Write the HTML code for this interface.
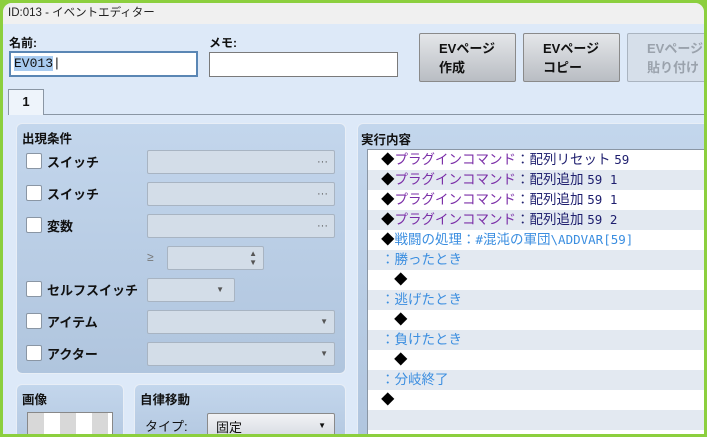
<!DOCTYPE html>
<html><head><meta charset="utf-8"><style>
*{box-sizing:border-box;margin:0;padding:0}
body{width:707px;height:437px;overflow:hidden;background:#8ccf3e;font-family:"Liberation Sans","Noto Sans CJK JP",sans-serif;font-size:13px;color:#111;position:relative}
.win{position:absolute;left:3px;top:3px;right:3px;bottom:3px;background:#dde9f8;border-radius:9px 9px 0 0;overflow:hidden}
.title{position:absolute;left:0;top:0;right:0;height:21px;background:#f0f0f0;font-size:11.5px;padding:1px 0 0 5px;color:#222}
.a{position:absolute}
.lbl{font-weight:bold;font-size:12px}
.inp{background:#fff;border:1px solid #7a7a7a}
.btn{position:absolute;top:30px;width:97px;height:49px;border:1px solid #8a8a8a;border-radius:2px;background:linear-gradient(#e4e6e9,#b9bdc3);font-weight:bold;font-size:13px;padding:5px 0 0 19px;line-height:19px}
.panel{position:absolute;border:1px solid #e8eef6;border-radius:6px;background:linear-gradient(#c3d6ec,#b0c5de)}
.ptitle{position:absolute;left:5px;top:4px;font-weight:bold;font-size:12.5px}
.cb{position:absolute;left:9px;width:16px;height:16px;background:#fff;border:1px solid #8a96a4;border-radius:2px}
.cl{position:absolute;left:30px;font-weight:bold;font-size:13px}
.fld{position:absolute;left:130px;width:188px;height:24px;border:1px solid #a8b4c2;border-radius:2px;background:#d3dde8;font-size:11px;color:#555;text-align:right;padding:0 6px 0 0;line-height:22px}
.list{position:absolute;left:9px;top:25px;right:-2px;bottom:0;background:#fff;border:1px solid #8a96a4}
.row{height:20px;line-height:20px;padding-left:13px;font-size:13.5px;white-space:nowrap;color:#1e1e6e}
.row:nth-child(even){background:#e3e9f1}
.p{color:#7b2fa8}.b{color:#3b8ee0}
.n{font-family:"DejaVu Sans Mono","Noto Sans CJK JP",monospace;font-size:12.5px}
</style></head><body>
<div class="win">
<div class="title">ID:013 - イベントエディター</div>
<div class="a lbl" style="left:6px;top:31px">名前:</div>
<div class="a inp" style="left:6px;top:48px;width:189px;height:26px;border:2px solid #5a86b4;padding:3px 3px;font-family:'Liberation Mono',monospace;font-size:13px"><span style="background:#a8cbf0">EV013</span>|</div>
<div class="a lbl" style="left:206px;top:31px">メモ:</div>
<div class="a inp" style="left:206px;top:49px;width:189px;height:25px"></div>
<div class="btn" style="left:416px">EVページ<br>作成</div>
<div class="btn" style="left:520px">EVページ<br>コピー</div>
<div class="btn" style="left:624px;background:#d6dfea;border-color:#aab4c0;color:#9aa2ac">EVページ<br>貼り付け</div>
<div class="a" style="left:5px;top:86px;width:36px;height:26px;background:#eef4fb;border:1px solid #8a96a4;border-bottom:none;font-weight:bold;text-align:center;line-height:24px;z-index:2">1</div>
<div class="a" style="left:5px;top:111px;right:0;bottom:0;border-top:1px solid #8a96a4;background:#dde9f8"></div>
<div class="panel" style="left:13px;top:120px;width:330px;height:251px">
<div class="ptitle">出現条件</div>
<div class="cb" style="top:29px"></div><div class="cl" style="top:28px">スイッチ</div><div class="fld" style="top:26px">···</div>
<div class="cb" style="top:61px"></div><div class="cl" style="top:60px">スイッチ</div><div class="fld" style="top:58px">···</div>
<div class="cb" style="top:93px"></div><div class="cl" style="top:92px">変数</div><div class="fld" style="top:90px">···</div>
<div class="a" style="left:130px;top:126px;color:#777;font-size:12px">≥</div>
<div class="fld" style="left:150px;top:122px;width:97px;font-size:8px;line-height:9px;padding-top:2px">▲<br>▼</div>
<div class="cb" style="top:157px"></div><div class="cl" style="top:156px">セルフスイッチ</div><div class="fld" style="top:154px;width:88px;font-size:8px;padding-right:10px">▼</div>
<div class="cb" style="top:189px"></div><div class="cl" style="top:188px">アイテム</div><div class="fld" style="top:186px;font-size:8px">▼</div>
<div class="cb" style="top:221px"></div><div class="cl" style="top:220px">アクター</div><div class="fld" style="top:218px;font-size:8px">▼</div>
</div>
<div class="panel" style="left:13px;top:381px;width:108px;height:70px">
<div class="ptitle">画像</div>
<div class="a" style="left:10px;top:27px;width:86px;height:30px;background:repeating-linear-gradient(90deg,#d8d8d8 0 16px,#fff 16px 32px);border:1px solid #888"></div>
</div>
<div class="panel" style="left:131px;top:381px;width:212px;height:70px">
<div class="ptitle">自律移動</div>
<div class="a" style="left:10px;top:31px;font-size:13px">タイプ:</div>
<div class="a" style="left:72px;top:28px;width:128px;height:26px;border:1px solid #8a8a8a;border-radius:2px;background:linear-gradient(#f2f3f5,#d6dbe2);padding:3px 8px;font-size:13px">固定<span style="float:right;font-size:8px;padding-top:4px">▼</span></div>
</div>
<div class="panel" style="left:354px;top:120px;width:360px;height:320px">
<div class="ptitle" style="top:5px;left:3px">実行内容</div>
<div class="list">
<div class="row"><span style="color:#000">◆</span><span class="p">プラグインコマンド</span>：配列リセット <span class="n">59</span></div>
<div class="row"><span style="color:#000">◆</span><span class="p">プラグインコマンド</span>：配列追加 <span class="n">59 1</span></div>
<div class="row"><span style="color:#000">◆</span><span class="p">プラグインコマンド</span>：配列追加 <span class="n">59 1</span></div>
<div class="row"><span style="color:#000">◆</span><span class="p">プラグインコマンド</span>：配列追加 <span class="n">59 2</span></div>
<div class="row b"><span style="color:#000">◆</span>戦闘の処理：<span class="n">#</span>混沌の軍団<span class="n">\ADDVAR[59]</span></div>
<div class="row b">：勝ったとき</div>
<div class="row" style="padding-left:26px;color:#000">◆</div>
<div class="row b">：逃げたとき</div>
<div class="row" style="padding-left:26px;color:#000">◆</div>
<div class="row b">：負けたとき</div>
<div class="row" style="padding-left:26px;color:#000">◆</div>
<div class="row b">：分岐終了</div>
<div class="row" style="color:#000">◆</div>
<div class="row"></div>
</div>
</div>
</div>
</body></html>
